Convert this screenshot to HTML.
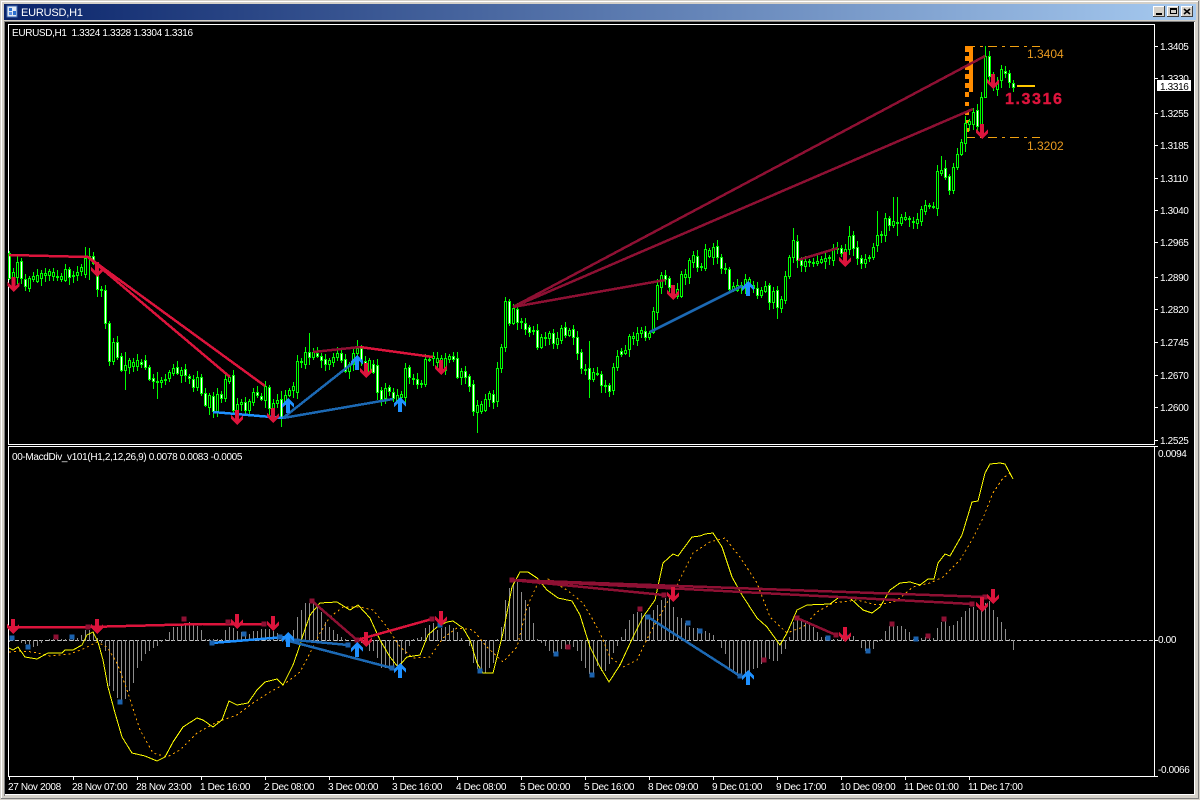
<!DOCTYPE html>
<html><head><meta charset="utf-8"><title>EURUSD,H1</title>
<style>
html,body{margin:0;padding:0;background:#000;width:1200px;height:800px;overflow:hidden}
svg{display:block}
text{font-family:"Liberation Sans",sans-serif;font-size:10px;fill:#fff;letter-spacing:-.35px}
</style></head><body>
<svg width="1200" height="800" viewBox="0 0 1200 800" xmlns="http://www.w3.org/2000/svg">
<defs>
<linearGradient id="tb" x1="0" x2="1" y1="0" y2="0"><stop offset="0" stop-color="#0a246a"/><stop offset="1" stop-color="#a6caf0"/></linearGradient>
<path id="d" d="M-2 0H2V9L6 5V9L0 15L-6 9V5L-2 9Z" shape-rendering="crispEdges"/>
<path id="u" d="M-2 15H2V6L6 10V6L0 0L-6 6V10L-2 6Z" shape-rendering="crispEdges"/>
<path id="s" d="M-2.500 -2.500h5v5h-5z"/>
</defs>
<!-- window frame -->
<rect width="1200" height="800" fill="#d4d0c8"/>
<rect x="1" y="1" width="1198" height="1" fill="#fff"/>
<rect x="1" y="1" width="1" height="798" fill="#fff"/>
<rect x="1198" y="1" width="1" height="798" fill="#808080"/>
<rect x="1" y="798" width="1198" height="1" fill="#808080"/>
<rect x="4" y="4" width="1192" height="16" fill="url(#tb)"/>
<rect x="4" y="20" width="1192" height="1" fill="#d4d0c8"/>
<rect x="4" y="21" width="1191" height="1" fill="#808080"/>
<rect x="4" y="21" width="1" height="775" fill="#808080"/>
<rect x="5" y="22" width="1189" height="772" fill="#000"/>
<rect x="5" y="794" width="1190" height="1" fill="#fff"/>
<rect x="1194" y="22" width="1" height="773" fill="#fff"/>
<!-- title -->
<rect x="7" y="6" width="10" height="11" fill="#dfe8f5" stroke="#3a66b0" stroke-width="1"/>
<rect x="9" y="8" width="3" height="3" fill="#2a6fd0"/><rect x="13" y="11" width="3" height="4" fill="#2a6fd0"/><rect x="9" y="12" width="3" height="3" fill="#5a8fe0"/>
<text x="21" y="16" style="font-size:11px;letter-spacing:-.2px">EURUSD,H1</text>
<g shape-rendering="crispEdges">
<g id="b"><rect x="1153" y="6" width="12" height="11" fill="#d4d0c8"/><path d="M1153.500 17V6.500H1165" stroke="#fff" fill="none"/><path d="M1153 16.500H1164.500V6" stroke="#404040" fill="none"/></g>
<rect x="1167" y="6" width="12" height="11" fill="#d4d0c8"/><path d="M1167.500 17V6.500H1179" stroke="#fff" fill="none"/><path d="M1167 16.500H1178.500V6" stroke="#404040" fill="none"/>
<rect x="1181" y="6" width="12" height="11" fill="#d4d0c8"/><path d="M1181.500 17V6.500H1193" stroke="#fff" fill="none"/><path d="M1181 16.500H1192.500V6" stroke="#404040" fill="none"/>
<rect x="1156" y="13" width="6" height="2" fill="#000"/>
<path d="M1170.500 9.500h6v4h-6z" fill="none" stroke="#000"/><rect x="1170" y="8" width="7" height="2" fill="#000"/>
</g>
<path d="M1184 9l6 5M1190 9l-6 5" stroke="#000" stroke-width="1.600"/>
<!-- chart frames -->
<g fill="#fff" shape-rendering="crispEdges">
<rect x="8" y="24" width="1147" height="1"/><rect x="8" y="24" width="1" height="421"/><rect x="1154" y="24" width="1" height="421"/><rect x="8" y="444" width="1147" height="1"/>
<rect x="8" y="446" width="1147" height="1"/><rect x="8" y="446" width="1" height="331"/><rect x="1154" y="446" width="1" height="331"/><rect x="8" y="776" width="1147" height="1"/>
<path d="M1155 46h3v1h-3zM1155 78h3v1h-3zM1155 113h3v1h-3zM1155 145h3v1h-3zM1155 178h3v1h-3zM1155 210h3v1h-3zM1155 242h3v1h-3zM1155 277h3v1h-3zM1155 309h3v1h-3zM1155 342h3v1h-3zM1155 375h3v1h-3zM1155 407h3v1h-3zM1155 440h3v1h-3zM1155 446h3v1h-3zM1155 640h3v1h-3zM1155 776h3v1h-3z"/>
<path d="M9 777h1v3h-1zM73 777h1v3h-1zM137 777h1v3h-1zM201 777h1v3h-1zM265 777h1v3h-1zM329 777h1v3h-1zM393 777h1v3h-1zM457 777h1v3h-1zM521 777h1v3h-1zM585 777h1v3h-1zM649 777h1v3h-1zM713 777h1v3h-1zM777 777h1v3h-1zM841 777h1v3h-1zM905 777h1v3h-1zM969 777h1v3h-1z"/>
</g>
<!-- orange range (behind candles) -->
<g shape-rendering="crispEdges">
<path d="M966 46.500H1040M966 137.500H1040" stroke="#f0a010" stroke-dasharray="9 5 3 5" fill="none"/>
<path d="M969 46h4v46h-4zM965 46h4v6h-4zM965 56h4v5h-4zM965 65h4v5h-4zM965 74h4v5h-4zM965 83h4v5h-4zM965 92h4v5h-4zM965 102h4v4h-4zM965 111h4v4h-4zM966 120h3v3h-3zM966 128h3v4h-3z" fill="#ff8c00"/>
<rect x="1017" y="85" width="18" height="2" fill="#ffc800"/>
</g>
<!-- candles -->
<g shape-rendering="crispEdges">
<path id="wk" fill="#0f0"/><path id="inK" fill="#000"/><path id="inW" fill="#fff"/>
</g>
<text x="1027" y="58" style="font-size:12px;fill:#e89a20;letter-spacing:0">1.3404</text>
<text x="1027" y="150" style="font-size:12px;fill:#e89a20;letter-spacing:0">1.3202</text>
<text x="1005" y="104" style="font-size:16px;font-weight:bold;fill:#dc143c;stroke:#dc143c;stroke-width:.4px;letter-spacing:1.6px">1.3316</text>
<!-- price divergence lines -->
<g fill="none" stroke-width="2.500" shape-rendering="crispEdges">
<path d="M9 255L88 257L230 377M88 257L265 386" stroke="#dc143c"/>
<path d="M213 412L283 418" stroke="#1e90ff"/>
<path d="M283 418L354 362M283 418L393 399" stroke="#1c69b4"/>
<path d="M313 352L360 347" stroke="#8e1033"/><path d="M360 347L433 357" stroke="#dc143c"/>
<path d="M513 307L985 56M513 307L973 109M513 307L665 280M798 260L838 248" stroke="#8e1033"/>
<path d="M650 332L742 286" stroke="#1c69b4"/>
</g>
<g fill="#dc143c">
<use href="#d" x="13.500" y="277"/><use href="#d" x="97" y="262"/><use href="#d" x="237" y="410"/><use href="#d" x="273" y="408"/><use href="#d" x="366" y="363"/><use href="#d" x="441" y="360"/><use href="#d" x="673" y="285"/><use href="#d" x="845" y="252"/><use href="#d" x="982" y="124"/><use href="#d" x="993" y="74"/>
</g>
<g fill="#1e90ff">
<use href="#u" x="288" y="398"/><use href="#u" x="357" y="355"/><use href="#u" x="400" y="397"/><use href="#u" x="748" y="281"/>
</g>
<!-- macd -->
<path d="M9 640.500H1154" stroke="#c8c8c8" stroke-dasharray="4 2" shape-rendering="crispEdges"/>
<path id="hist" fill="#8c8c8c" shape-rendering="crispEdges"/>
<path fill="none" stroke="#ffa500" stroke-dasharray="2 3" shape-rendering="crispEdges" d="M9 652L20 651L33 652L50 656L70 654L83 649L97 642L107 647L117 663L127 690L140 730L153 753L167 757L180 750L197 733L217 722L237 715L253 703L270 692L283 685L300 672L310 653L320 633L330 617L343 607L360 607L373 610L387 627L400 647L413 658L430 657L443 638L457 628L473 630L487 647L503 662L517 647L527 607L537 585L548 579L567 590L583 603L593 620L600 633L610 657L623 667L637 660L650 633L663 610L677 585L693 553L710 542L725 538L740 557L757 583L770 617L787 633L803 627L817 612L833 603L857 600L877 605L893 602L900 598L913 587L930 583L943 577L960 560L972 540L983 518L993 493L1003 478L1012 472"/>
<path fill="none" stroke="#ffff00" shape-rendering="crispEdges" d="M9 648L13 650L18 647L25 657L37 659L48 653L62 653L65 650L73 650L82 645L87 635L93 632L98 642L103 660L108 687L115 713L122 737L132 753L145 756L157 761L165 757L173 742L183 727L197 718L203 720L213 727L222 720L229 701L237 705L248 703L257 690L265 682L277 679L283 685L293 665L300 645L303 635L310 615L320 603L337 602L350 610L358 605L370 618L380 640L390 657L398 667L407 657L420 655L428 635L437 627L447 622L453 621L463 628L470 640L477 663L483 673L493 673L503 633L512 587L520 572L528 572L537 578L547 590L558 598L572 601L580 615L590 647L600 667L609 682L620 665L633 637L643 617L655 600L663 563L673 554L678 556L692 537L700 536L705 534L713 533L722 547L732 577L742 595L757 618L767 627L780 645L787 633L797 610L807 605L830 604L838 598L850 598L863 610L872 613L880 607L890 590L900 583L910 582L920 585L928 579L934 579L938 563L945 554L950 556L962 535L972 502L978 501L985 473L990 464L1000 463L1005 464L1013 479"/>
<g fill="none" stroke-width="2.500" shape-rendering="crispEdges">
<path d="M9 627L88 627L203 624L265 624" stroke="#dc143c"/>
<path d="M212 643L285 637" stroke="#1e90ff"/>
<path d="M285 639L348 645M285 640L392 668M648 617L740 676" stroke="#1c69b4"/>
<path d="M312 601L357 640M512 580L972 604M512 580L985 597M512 580L664 595M797 618L836 635" stroke="#8e1033"/>
<path d="M357 640L432 619" stroke="#dc143c"/>
</g>
<g fill="#8e1033" shape-rendering="crispEdges">
<use href="#s" x="56" y="637"/><use href="#s" x="88" y="627"/><use href="#s" x="184" y="619"/><use href="#s" x="228" y="622"/><use href="#s" x="264" y="624"/><use href="#s" x="312" y="601"/><use href="#s" x="357" y="640"/><use href="#s" x="432" y="619"/><use href="#s" x="512" y="580"/><use href="#s" x="568" y="647"/><use href="#s" x="640" y="609"/><use href="#s" x="664" y="595"/><use href="#s" x="764" y="660"/><use href="#s" x="797" y="618"/><use href="#s" x="836" y="635"/><use href="#s" x="892" y="624"/><use href="#s" x="928" y="636"/><use href="#s" x="944" y="619"/><use href="#s" x="972" y="604"/><use href="#s" x="985" y="597"/>
</g>
<g fill="#1b62ae" shape-rendering="crispEdges">
<use href="#s" x="12" y="638"/><use href="#s" x="28" y="647"/><use href="#s" x="72" y="637"/><use href="#s" x="120" y="702"/><use href="#s" x="212" y="643"/><use href="#s" x="244" y="634"/><use href="#s" x="280" y="637"/><use href="#s" x="297" y="641"/><use href="#s" x="348" y="645"/><use href="#s" x="392" y="668"/><use href="#s" x="440" y="625"/><use href="#s" x="480" y="671"/><use href="#s" x="556" y="654"/><use href="#s" x="592" y="675"/><use href="#s" x="648" y="617"/><use href="#s" x="688" y="623"/><use href="#s" x="700" y="631"/><use href="#s" x="740" y="676"/><use href="#s" x="828" y="638"/><use href="#s" x="845" y="637"/><use href="#s" x="868" y="651"/><use href="#s" x="916" y="639"/>
</g>
<g fill="#dc143c">
<use href="#d" x="13" y="619"/><use href="#d" x="97" y="619"/><use href="#d" x="237" y="614"/><use href="#d" x="273" y="616"/><use href="#d" x="366" y="632"/><use href="#d" x="441" y="611"/><use href="#d" x="673" y="587"/><use href="#d" x="845" y="627"/><use href="#d" x="982" y="597"/><use href="#d" x="993" y="589"/>
</g>
<g fill="#1e90ff">
<use href="#u" x="288" y="632"/><use href="#u" x="357" y="642"/><use href="#u" x="400" y="663"/><use href="#u" x="748" y="670"/>
</g>
<!-- labels -->
<text x="12" y="36" xml:space="preserve">EURUSD,H1  1.3324 1.3328 1.3304 1.3316</text>
<text x="12" y="460">00-MacdDiv_v101(H1,2,12,26,9) 0.0078 0.0083 -0.0005</text>
<text x="1160" y="50">1.3405</text>
<text x="1160" y="82">1.3330</text>
<rect x="1157" y="80" width="34" height="11" fill="#fff"/>
<text x="1160" y="90" style="fill:#000">1.3316</text>
<text x="1160" y="117">1.3255</text>
<text x="1160" y="149">1.3185</text>
<text x="1160" y="182">1.3110</text>
<text x="1160" y="214">1.3040</text>
<text x="1160" y="246">1.2965</text>
<text x="1160" y="281">1.2890</text>
<text x="1160" y="313">1.2820</text>
<text x="1160" y="346">1.2745</text>
<text x="1160" y="379">1.2670</text>
<text x="1160" y="411">1.2600</text>
<text x="1160" y="444">1.2525</text>
<text x="1158" y="457">0.0094</text>
<text x="1158" y="643">0.00</text>
<text x="1158" y="773">-0.0066</text>
<g>
<text x="8" y="790">27 Nov 2008</text>
<text x="72" y="790">28 Nov 07:00</text>
<text x="136" y="790">28 Nov 23:00</text>
<text x="200" y="790">1 Dec 16:00</text>
<text x="264" y="790">2 Dec 08:00</text>
<text x="328" y="790">3 Dec 00:00</text>
<text x="392" y="790">3 Dec 16:00</text>
<text x="456" y="790">4 Dec 08:00</text>
<text x="520" y="790">5 Dec 00:00</text>
<text x="584" y="790">5 Dec 16:00</text>
<text x="648" y="790">8 Dec 09:00</text>
<text x="712" y="790">9 Dec 01:00</text>
<text x="776" y="790">9 Dec 17:00</text>
<text x="840" y="790">10 Dec 09:00</text>
<text x="904" y="790">11 Dec 01:00</text>
<text x="968" y="790">11 Dec 17:00</text>
</g>
</svg>
<script>
(function(){
var C=[253,-278,272,277,262,277,261,-278,279,-286,278,288,276,279,275,281,273,278,273,275,271,275,272,276,276,277,276,279,269,280,269,-277,275,276,272,275,267,271,258,274,256,258,256,-263,275,-289,289,290,290,-323,323,-361,342,361,342,-357,356,-370,365,370,360,367,362,366,360,366,362,-364,360,-367,367,-379,378,-381,381,382,380,382,379,380,372,378,368,373,367,-373,370,375,369,-375,376,-378,379,-387,377,387,377,-393,393,-405,395,407,396,-411,394,411,394,-398,379,398,377,381,375,-410,404,410,402,404,402,-410,401,410,392,402,392,-395,396,-399,386,400,387,-408,403,408,400,403,399,-418,395,402,390,395,386,390,361,392,
361,362,352,364,352,-357,352,357,353,-356,356,-360,359,-364,360,364,357,362,353,357,353,-360,359,-371,364,371,353,364,348,353,348,-361,361,-368,360,371,364,-372,365,-392,390,-399,388,398,387,-391,392,-398,395,400,394,397,368,397,367,-377,378,379,379,-384,383,384,359,384,359,360,356,358,358,362,358,365,358,370,356,359,356,-359,358,-377,371,377,371,-377,376,-386,384,-411,405,412,404,411,399,410,393,399,394,-402,368,401,347,368,301,347,301,-323,308,323,309,-322,321,322,323,-329,327,-332,330,331,330,-347,337,347,337,338,333,338,333,-343,338,344,
328,340,327,-335,330,335,329,-337,337,-353,352,-368,369,370,368,-379,372,379,373,374,374,-385,385,386,385,-391,367,390,356,367,351,-354,350,353,336,349,336,338,333,340,330,333,331,-337,333,337,311,332,285,312,275,287,275,-279,278,-287,289,295,289,296,274,296,274,277,260,277,255,262,256,-267,266,267,249,268,250,256,247,257,246,-257,257,-268,268,269,269,-289,286,289,285,290,285,286,279,287,279,285,285,288,288,-295,290,295,286,291,285,-302,291,302,290,-307,299,308,276,300,257,276,240,257,241,-260,260,-265,261,266,261,262,262,263,261,263,259,262,258,261,257,258,248,260,248,249,248,-253,249,253,
236,249,235,-248,247,-258,258,-263,259,263,257,258,247,257,235,245,234,235,218,235,218,-225,221,225,222,223,217,223,217,219,218,219,221,222,219,223,209,221,205,211,205,206,206,207,171,208,170,173,168,-177,176,-190,167,190,154,167,142,154,123,143,121,124,112,124,110,-126,97,125,56,97,56,-76,76,83,83,89,69,80,71,-73,73,-82,83,-87];
var W={19:[247,278],20:[248,280],29:[352,390],37:[372,399],56:[370,414],68:[391,427],75:[333,365],87:[340,365],124:[297,352],117:[400,433],145:[341,398],192:[286,319],196:[228,263],210:[226,255],222:[197,236],217:[211,252],233:[156,176],234:[160,180],239:[116,152],244:[46,98],245:[51,82],243:[92,128],248:[65,88],250:[70,88],251:[80,92]};
W[221]=[197,228];
var w="",k="",h="",n=C.length/2,i;
for(i=0;i<n;i++){
 var x=9+4*i,t=C[2*i],b=C[2*i+1],wh=b<0;b=Math.abs(b);
 var o=W[i]||[t-(2+(i*7%5)),b+(2+(i*13%7))];
 w+="M"+x+" "+o[0]+"h1V"+o[1]+"h-1z";
 w+="M"+(x-1)+" "+t+"h3V"+(b+1)+"h-3z";
 if(b-t>=2){var s="M"+x+" "+(t+1)+"h1V"+b+"h-1z";if(wh)h+=s;else k+=s;}
}
document.getElementById("wk").setAttribute("d",w);
document.getElementById("inK").setAttribute("d",k);
document.getElementById("inW").setAttribute("d",h);
var H=[-1,0,0,-2,-3,-6,-6,-5,-2,0,1,1,1,1,1,1,2,2,5,10,10,8,2,-2,-10,-45,-50,-57,-60,-58,-50,-42,-27,-20,-13,-10,-7,-5,-1,1,8,13,13,15,17,18,17,14,10,1,1,1,1,1,10,13,12,9,8,7,6,9,9,11,11,11,9,7,5,4,5,10,23,
30,37,37,37,33,28,18,13,10,6,3,1,0,0,-1,-2,-3,-10,-10,-17,-27,-27,-28,-28,-28,-25,-13,-5,1,2,3,12,15,17,10,12,13,15,12,8,2,0,-5,-22,-28,-30,-32,-27,-22,1,13,40,52,57,58,48,40,33,17,1,-2,-5,-10,-12,-13,-8,-8,-8,-6,-10,-20,-27,-33,-33,-25,
-30,-30,-23,-12,-5,3,11,20,26,28,27,25,23,30,35,40,42,42,33,23,22,17,13,12,12,10,9,7,5,0,-7,-13,-27,-30,-35,-35,-35,-33,-28,-27,-23,-20,-18,-20,-20,-13,-8,3,18,20,20,17,17,13,8,3,3,1,1,1,3,1,3,4,0,-7,-10,-10,-8,-1,1,9,14,14,14,
14,11,8,1,1,2,3,3,2,12,18,20,14,15,19,23,29,32,33,30,32,37,39,30,23,18,11,1,-9];
var p="";
for(i=0;i<H.length;i++){
 var v=H[i],X=9+4*i;
 if(v>0)p+="M"+X+" "+(640-v)+"h1V641h-1z";
 else if(v<0)p+="M"+X+" 640h1V"+(641-v)+"h-1z";
}
document.getElementById("hist").setAttribute("d",p);
})();
</script>
</body></html>
